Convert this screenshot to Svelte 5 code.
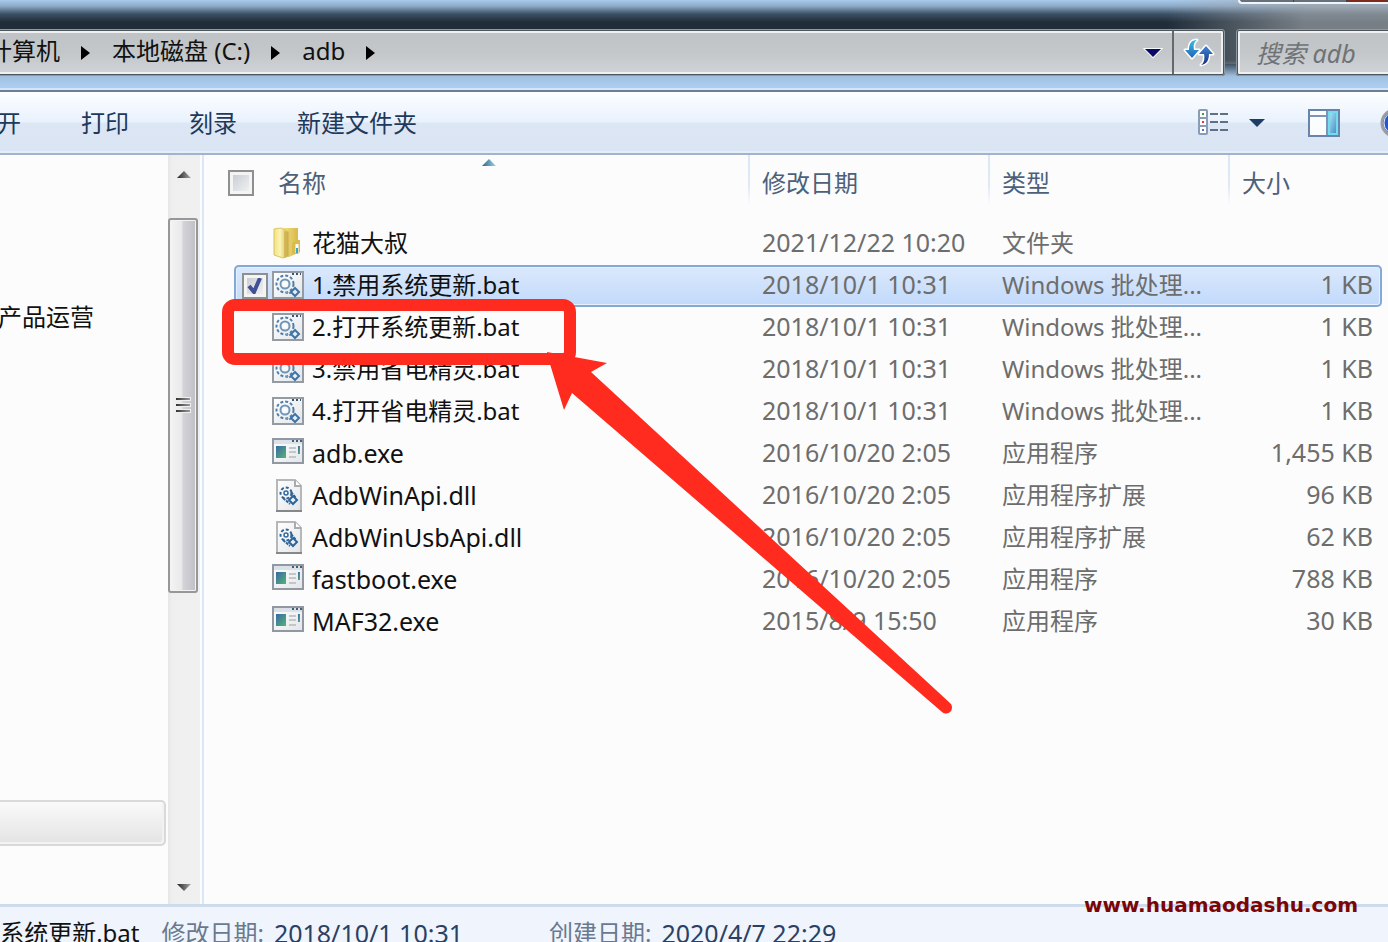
<script>
  const crumbs = ['计算机', '本地磁盘 (C:)', 'adb'];
  const commands = ['打开', '打印', '刻录', '新建文件夹'];
  const bat = 'Windows 批处理...';
  let files = $state([
    { kind: 'folder', name: '花猫大叔', date: '2021/12/22 10:20', type: '文件夹', size: '' },
    { kind: 'bat', name: '1.禁用系统更新.bat', date: '2018/10/1 10:31', type: bat, size: '1 KB', selected: true },
    { kind: 'bat', name: '2.打开系统更新.bat', date: '2018/10/1 10:31', type: bat, size: '1 KB' },
    { kind: 'bat', name: '3.禁用省电精灵.bat', date: '2018/10/1 10:31', type: bat, size: '1 KB' },
    { kind: 'bat', name: '4.打开省电精灵.bat', date: '2018/10/1 10:31', type: bat, size: '1 KB' },
    { kind: 'exe', name: 'adb.exe', date: '2016/10/20 2:05', type: '应用程序', size: '1,455 KB' },
    { kind: 'dll', name: 'AdbWinApi.dll', date: '2016/10/20 2:05', type: '应用程序扩展', size: '96 KB' },
    { kind: 'dll', name: 'AdbWinUsbApi.dll', date: '2016/10/20 2:05', type: '应用程序扩展', size: '62 KB' },
    { kind: 'exe', name: 'fastboot.exe', date: '2016/10/20 2:05', type: '应用程序', size: '788 KB' },
    { kind: 'exe', name: 'MAF32.exe', date: '2015/8/9 15:50', type: '应用程序', size: '30 KB' }
  ]);
</script>

{#snippet icon(kind)}
  <svg class="icon" width="32" height="34" viewBox="0 0 32 34" aria-hidden="true">
    {#if kind === 'folder'}
      <path d="M11 2h15v25l-9 4-6-2z" fill="url(#folder-back)" />
      <path d="M26 14h2v12l-2 2h-6V17z" fill="#d9bd4c" />
      <path d="M2 3l7-1 8 4v24l-6 2-9-3z" fill="url(#folder-front)" stroke="#dcc563" />
      <path d="M12 5l4 1v24l-4 2z" fill="#c9a83f" opacity=".6" />
      <path d="M25 18v9" stroke="#fff" stroke-width="3" />
      <path d="M25 22v5" stroke="#35a6cf" stroke-width="2" />
    {:else if kind === 'bat'}
      <rect x="1" y="4" width="30" height="26" fill="url(#paper)" stroke="#959ba3" stroke-width="2" />
      <path d="M20 6h2M24 6h2M28 6h1" stroke="#3c536e" stroke-width="2" />
      <circle cx="13" cy="16" r="8.5" fill="none" stroke="#4d7fae" stroke-width="2" stroke-dasharray="3 2" />
      <circle cx="13" cy="16" r="4.5" fill="#f6f9fc" stroke="#7395b5" stroke-width="2" />
      <circle cx="13" cy="16" r="1.5" fill="#fff" />
      <path d="M14 25h6" stroke="#6d98bf" stroke-width="2" stroke-dasharray="2 1" />
      <path d="M23 20l4 4-4 4-4-4z" fill="#e4eef7" stroke="#3f73a5" stroke-width="2" />
    {:else if kind === 'exe'}
      <rect x="1" y="3" width="30" height="24" fill="url(#paper)" stroke="#9298a1" stroke-width="2" />
      <rect x="2" y="4" width="28" height="4" fill="#dbe1e8" />
      <path d="M20 5h2M24 5h2M28 5h2" stroke="#465d78" stroke-width="2" />
      <rect x="4" y="10" width="10" height="12" fill="url(#screen)" />
      <path d="M17 12h7M17 16h7M17 21h7" stroke="#c4c6c9" stroke-width="2" />
      <rect x="26" y="10" width="2" height="8" fill="url(#screen)" />
    {:else}
      <path d="M5 2h18l6 6v25H5z" fill="url(#paper)" stroke="#b5b7b9" stroke-width="2" />
      <path d="M4 33h26" stroke="#858789" stroke-width="2" />
      <path d="M23 2v6h6" fill="#fff" stroke="#a9acaf" stroke-width="2" />
      <circle cx="14" cy="15" r="5.5" fill="none" stroke="#2f6498" stroke-width="2" stroke-dasharray="3 2" />
      <circle cx="14" cy="15" r="2" fill="#fff" stroke="#32699e" stroke-width="1.5" />
      <path d="M11 20l7 6M19 14l5 6" stroke="#2f6498" stroke-width="2" stroke-dasharray="3 1" />
      <path d="M21 18l4 4-4 4-4-4z" fill="#e9f1f8" stroke="#2f6498" stroke-width="2" />
    {/if}
  </svg>
{/snippet}

<svg class="defs" width="0" height="0" aria-hidden="true">
  <defs>
    <linearGradient id="folder-back"><stop offset="0" stop-color="#f3df83" /><stop offset="1" stop-color="#d8b94a" /></linearGradient>
    <linearGradient id="folder-front"><stop offset="0" stop-color="#f2e27c" /><stop offset=".4" stop-color="#fbf3b4" /><stop offset="1" stop-color="#ceb04b" /></linearGradient>
    <linearGradient id="paper" x2="1" y2="1"><stop offset="0" stop-color="#fff" /><stop offset="1" stop-color="#e2e5e8" /></linearGradient>
    <linearGradient id="screen" x2="1" y2="1"><stop offset="0" stop-color="#3a67a8" /><stop offset="1" stop-color="#52b574" /></linearGradient>
    <linearGradient id="down" x2="0" y2="1"><stop offset="0" stop-color="#35bfe8" /><stop offset="1" stop-color="#2560b4" /></linearGradient>
    <linearGradient id="up" x2="0" y2="1"><stop offset="0" stop-color="#3a86d8" /><stop offset="1" stop-color="#1c2f78" /></linearGradient>
    <linearGradient id="pane" x2="1" y2="1"><stop offset="0" stop-color="#b4e3f4" /><stop offset="1" stop-color="#3c8cc4" /></linearGradient>
    <linearGradient id="sort"><stop offset="0" stop-color="#2d6486" /><stop offset="1" stop-color="#9ed3ea" /></linearGradient>
    <linearGradient id="ink"><stop offset="0" stop-color="#222" /><stop offset="1" stop-color="#aaa" /></linearGradient>
  </defs>
</svg>

<div class="window">
  <header class="frame">
    <div class="caption" aria-hidden="true"><i></i><i></i><i class="close"></i></div>
    <div class="address">
      <nav class="crumbs" aria-label="路径">
        {#each crumbs as crumb}
          <button>{crumb}</button>
          <svg width="9" height="16" viewBox="0 0 9 16" aria-hidden="true"><path d="M0 1l9 7-9 7z" /></svg>
        {/each}
      </nav>
      <button class="history" aria-label="历史记录">
        <svg width="20" height="14" viewBox="0 0 20 14"><path d="M2 3h16l-8 8z" fill="#0a0a66" stroke="#f4f6f8" stroke-width="2" paint-order="stroke" /></svg>
      </button>
      <button class="refresh" aria-label="刷新">
        <svg width="32" height="30" viewBox="0 0 32 30" stroke="#fff" stroke-width="3" paint-order="stroke" stroke-linejoin="round">
          <path d="M14 2C8 2 6 6 6 12H2l7 8 7-8h-5c-1-5 0-8 3-10z" fill="url(#down)" />
          <path d="M18 27c6-1 8-5 8-11h4l-7-8-7 8h5c1 5 0 9-3 11z" fill="url(#up)" />
        </svg>
      </button>
    </div>
    <input class="search" type="text" placeholder="搜索 adb" aria-label="搜索 adb" />
  </header>

  <div class="toolbar">
    <div class="commands">
      {#each commands as command}<button>{command}</button>{/each}
    </div>
    <div class="tools">
      <button class="views" aria-label="更改您的视图">
        <svg width="32" height="28" viewBox="0 0 32 28">
          {#each ['#3f9a4c', '#e8382c', '#3a78d8'] as dot, i}
            <rect x="1" y={1 + i * 8} width="8" height="8" rx="1" fill="#fff" stroke="#8a9cb4" stroke-width="2" />
            <rect x="4" y={4 + i * 8} width="2" height="2" fill={dot} />
            <path d={`M12 ${5 + i * 8}h8M22 ${5 + i * 8}h8`} stroke="#5f6f86" stroke-width="2" />
          {/each}
        </svg>
      </button>
      <button class="more" aria-label="更多选项">
        <svg width="16" height="10" viewBox="0 0 16 10"><path d="M0 1h16L8 9z" fill="#1d3c66" /></svg>
      </button>
      <button class="preview" aria-label="显示预览窗格">
        <svg width="32" height="28" viewBox="0 0 32 28">
          <rect x="1" y="1" width="30" height="26" fill="#fbfcfd" stroke="#6884aa" stroke-width="2" />
          <path d="M2 7h17M19 2v24" stroke="#7c95b7" stroke-width="2" />
          <rect x="21" y="3" width="8" height="22" fill="url(#pane)" stroke="#6fdcf0" stroke-width="2" />
        </svg>
      </button>
      <button class="help" aria-label="获取帮助">
        <svg width="30" height="30" viewBox="0 0 30 30"><circle cx="15" cy="15" r="13" fill="#2857c8" stroke="#9b9da2" stroke-width="3" /><circle cx="15" cy="15" r="11" fill="none" stroke="#dfe6f4" /></svg>
      </button>
    </div>
  </div>

  <main>
    <aside>
      <a class="place" href="#ops">产品运营</a>
      <div class="current"></div>
    </aside>
    <div class="scrollbar" aria-hidden="true">
      <div class="end up"><svg width="16" height="9" viewBox="0 0 16 9"><path d="M1 8l7-7 7 7z" fill="url(#ink)" /></svg></div>
      <div class="thumb"><i></i><i></i><i></i></div>
      <div class="end down"><svg width="16" height="9" viewBox="0 0 16 9"><path d="M1 1h14L8 8z" fill="url(#ink)" /></svg></div>
    </div>
    <section class="listing">
      <svg class="sort" width="14" height="8" viewBox="0 0 14 8" aria-hidden="true"><path d="M0 8l7-7 7 7z" fill="url(#sort)" /></svg>
      <table>
        <thead>
          <tr>
            <th class="name"><input class="all" type="checkbox" aria-label="全选" /><span>名称</span></th>
            <th>修改日期</th>
            <th>类型</th>
            <th>大小</th>
          </tr>
        </thead>
        <tbody>
          {#each files as file, i}
            <tr class:selected={file.selected}>
              <td class="name">
                <input type="checkbox" bind:checked={file.selected} id={`file-${i}`} />
                {@render icon(file.kind)}
                <label class:latin={file.kind === 'exe' || file.kind === 'dll'} for={`file-${i}`}>{file.name}</label>
              </td>
              <td class="latin">{file.date}</td>
              <td>{file.type}</td>
              <td class="latin size">{file.size}</td>
            </tr>
          {/each}
        </tbody>
      </table>
    </section>
  </main>

  <footer>
    <span class="title">1.禁用系统更新.bat</span>
    <dl>
      <div><dt>修改日期:</dt><dd class="latin">2018/10/1 10:31</dd></div>
      <div><dt>创建日期:</dt><dd class="latin">2020/4/7 22:29</dd></div>
    </dl>
    <span class="watermark">www.huamaodashu.com</span>
  </footer>

  <svg class="annotation" width="1388" height="942" viewBox="0 0 1388 942" aria-hidden="true">
    <rect x="228" y="305" width="342" height="54" rx="7" fill="none" stroke="#fe2b1e" stroke-width="12" />
    <path d="M547 352l60 11-16 9 359 331a6 6 0 0 1-8 9L572 393l-8 17-14-46z" fill="#fe2b1e" />
  </svg>
</div>

<style>
  :global(body) { margin: 0; overflow: hidden; }
  .window {
    position: relative;
    display: flex;
    flex-direction: column;
    height: 100vh;
    overflow: hidden;
    background: #fcfcfc;
    color: #111;
    font: 24px/32px "Noto Sans", "Noto Sans CJK SC", sans-serif;
  }
  .latin { font-size: 25px; }
  .defs { position: absolute; }
  button { padding: 0; border: 0; background: none; color: inherit; font: inherit; white-space: nowrap; }
  button svg { display: block; }

  .frame {
    position: relative;
    flex: none;
    display: flex;
    gap: 11px;
    padding: 29px 0 14px;
    border-bottom: 2px solid #6b7f92;
    box-shadow: inset 0 -2px #d3e5f7;
    background:
      linear-gradient(90deg, transparent 84%, #a3a7abaa 94%) 0 0 / 100% 64px no-repeat,
      linear-gradient(#a9caec 0, #8dabc9 6px, #3c5165 14px, #202d39 22px, #1f2c38 60px, #9ebfdf 76px, #accdf0 86px);
  }
  .caption {
    position: absolute;
    top: 0;
    right: 0;
    display: flex;
    width: 148px;
    height: 2px;
    border: solid #f1f5f8;
    border-width: 0 0 2px 2px;
    border-radius: 0 0 0 8px;
    background: #66717c;
  }
  .caption i { flex: 1; border-right: 1px solid #3b444d; }
  .caption .close { flex: none; width: 40px; background: #7d2b1d; }
  .address, .search {
    box-sizing: border-box;
    height: 47px;
    border: 2px solid #4e555b;
    border-radius: 3px;
    outline: 1px solid #8e99a3;
    outline-offset: -1px;
    box-shadow: inset 0 0 0 2px #eef0f1;
    background: linear-gradient(#bfc3c5, #c3c7c9 50%, #d0d4d8);
  }
  .address { flex: 1; display: flex; margin-left: -14px; }
  .crumbs { flex: 1; display: flex; align-items: center; gap: 21px; }
  .crumbs button { padding-bottom: 3px; }
  .crumbs svg { margin-right: 1px; }
  .history { width: 40px; display: grid; place-items: center; border-right: 2px solid #63696e; }
  .refresh { width: 49px; display: grid; place-items: center; }
  .search { width: 164px; margin-right: -12px; padding: 0 0 0 18px; font: italic 25px/32px "Noto Sans", "Noto Sans CJK SC", sans-serif; }
  .search::placeholder { color: #6f7376; opacity: 1; }

  .toolbar {
    flex: none;
    display: flex;
    justify-content: space-between;
    height: 61px;
    border-bottom: 2px solid #a3b3cb;
    box-shadow: inset 0 -2px #e4edf8;
    background: linear-gradient(#fdfeff, #e9f2fd 48%, #dce6f4 52%, #dae5f4);
    color: #1e395b;
  }
  .commands { display: flex; align-items: center; gap: 60px; margin-left: -27px; }
  .tools { display: flex; align-items: center; margin-right: -22px; }
  .more { margin-left: 19px; }
  .preview { margin-left: 43px; }
  .help { margin-left: 40px; }

  main { flex: 1; display: flex; min-height: 0; }
  aside { width: 168px; display: flex; flex-direction: column; justify-content: space-between; padding: 146px 0 58px; box-sizing: border-box; }
  .place { margin-left: -2px; color: #111; text-decoration: none; }
  .current {
    height: 42px;
    margin-right: 2px;
    border: 2px solid #d9d9d9;
    border-left: 0;
    border-radius: 0 5px 5px 0;
    box-shadow: inset -2px -2px #f2f2f2;
    background: linear-gradient(#fafafa, #e3e3e3);
  }
  .scrollbar { width: 32px; display: flex; flex-direction: column; background: linear-gradient(90deg, #e6e6e6, #efefef 4px, #f0f0f0); }
  .end { display: flex; justify-content: center; }
  .end.up { height: 63px; padding-top: 15px; box-sizing: border-box; }
  .end.down { flex: 1; align-items: end; padding-bottom: 12px; }
  .thumb {
    height: 50%;
    box-sizing: border-box;
    display: flex;
    flex-direction: column;
    justify-content: center;
    gap: 4px;
    padding-left: 6px;
    margin-right: 2px;
    border: 2px solid #979797;
    border-radius: 3px;
    box-shadow: inset 0 0 0 1px #f3f3f3;
    background: linear-gradient(90deg, #f4f4f4, #e9e9eb 45%, #d3d3d8 50%, #bfbfc6);
  }
  .thumb i { width: 14px; height: 2px; background: linear-gradient(90deg, #333, #999); outline: 1px solid #eee; }

  .listing { position: relative; flex: 1; min-width: 0; margin-left: 2px; border-left: 2px solid #d9e8f7; padding: 0 6px 0 30px; }
  .sort { position: absolute; left: 278px; top: 3px; }
  table { display: block; }
  thead, tbody { display: block; }
  tr { display: grid; grid-template-columns: minmax(0, 1fr) 240px 240px 154px; }
  th, td { padding: 0 0 0 14px; text-align: left; font-weight: 400; white-space: nowrap; }
  thead tr { height: 68px; color: #4c607a; }
  th { height: 50px; line-height: 56px; background: linear-gradient(#dbe6f6, #dfe9f7 60%, transparent) 0 0 / 2px 100% no-repeat; }
  th.name { display: flex; align-items: center; gap: 24px; margin-left: -6px; padding: 6px 0 0; height: 44px; background: none; }
  tbody tr { height: 42px; }
  td { line-height: 40px; color: #6d6d6d; }
  td.latin { line-height: 38px; }
  td.size { padding-right: 9px; text-align: right; }
  td.name { display: flex; align-items: center; gap: 4px; height: 42px; padding-left: 8px; }
  td.name label { margin-left: 4px; padding-bottom: 2px; color: #111; }
  .icon { flex: none; margin-top: -2px; }
  input[type='checkbox'] {
    appearance: none;
    flex: none;
    width: 26px;
    height: 26px;
    margin: 0;
    border: 2px solid #8e8f8f;
    box-shadow: inset 0 0 0 3px #f4f4f4;
    background: linear-gradient(135deg, #c3c8cf, #f6f6f6);
  }
  tbody tr:not(.selected) input { visibility: hidden; }
  input[type='checkbox']:checked {
    background:
      url("data:image/svg+xml,%3Csvg xmlns='http://www.w3.org/2000/svg' viewBox='0 0 22 22'%3E%3Cpath d='M5 11l5 6 6-14' fill='none' stroke='%23404f96' stroke-width='4'/%3E%3C/svg%3E") center / 22px,
      linear-gradient(135deg, #c3c8cf, #f6f6f6);
  }
  .selected {
    border-radius: 5px;
    box-shadow: inset 0 0 0 2px #84a9d6, inset 0 0 0 3px #e6f0fd;
    background: linear-gradient(#dce9fc, #c0d9fb);
  }

  footer {
    position: relative;
    flex: none;
    display: flex;
    gap: 22px;
    height: 25px;
    padding-top: 10px;
    margin-left: -68px;
    border-top: 3px solid #cddbea;
    background: #f0f4fc;
    white-space: nowrap;
  }
  dl { display: flex; gap: 86px; margin: 0; }
  dl div { display: flex; gap: 10px; }
  dt { color: #69798f; }
  dd { margin: 0; color: #2b4163; }
  .watermark { position: absolute; right: 30px; top: -18px; color: #7c0404; font: bold 20px/32px "DejaVu Sans", sans-serif; }
  .annotation { position: absolute; left: 0; top: 0; pointer-events: none; }
</style>
